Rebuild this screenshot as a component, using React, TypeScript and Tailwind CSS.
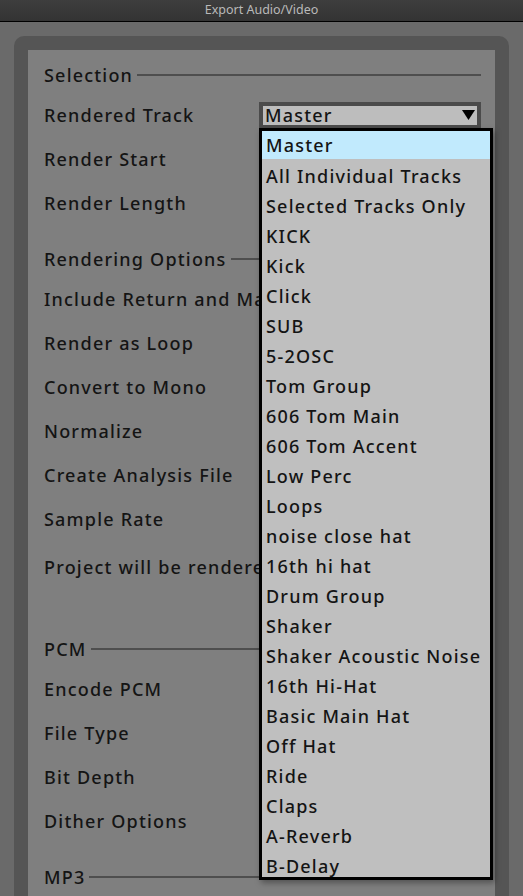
import React from "react";

type Row =
  | { kind: "header"; label: string }
  | { kind: "field"; label: string; tall?: boolean }
  | { kind: "gap"; size: "sm" | "lg" };

const rows: Row[] = [
  { kind: "header", label: "Selection" },
  { kind: "field", label: "Rendered Track" },
  { kind: "field", label: "Render Start" },
  { kind: "field", label: "Render Length" },
  { kind: "gap", size: "sm" },
  { kind: "header", label: "Rendering Options" },
  { kind: "field", label: "Include Return and Master Effects" },
  { kind: "field", label: "Render as Loop" },
  { kind: "field", label: "Convert to Mono" },
  { kind: "field", label: "Normalize" },
  { kind: "field", label: "Create Analysis File" },
  { kind: "field", label: "Sample Rate" },
  { kind: "field", label: "Project will be rendered at 44100 Hz", tall: true },
  { kind: "gap", size: "lg" },
  { kind: "header", label: "PCM" },
  { kind: "field", label: "Encode PCM" },
  { kind: "field", label: "File Type" },
  { kind: "field", label: "Bit Depth" },
  { kind: "field", label: "Dither Options" },
  { kind: "gap", size: "sm" },
  { kind: "header", label: "MP3" },
];

const tracks = [
  "Master",
  "All Individual Tracks",
  "Selected Tracks Only",
  "KICK",
  "Kick",
  "Click",
  "SUB",
  "5-2OSC",
  "Tom Group",
  "606 Tom Main",
  "606 Tom Accent",
  "Low Perc",
  "Loops",
  "noise close hat",
  "16th hi hat",
  "Drum Group",
  "Shaker",
  "Shaker Acoustic Noise",
  "16th Hi-Hat",
  "Basic Main Hat",
  "Off Hat",
  "Ride",
  "Claps",
  "A-Reverb",
  "B-Delay",
];

const TrackSelect = () => (
  <div className="flex h-[27px] w-[222px] shrink-0 items-center justify-between border-4 border-[#4b4b4b] bg-[#bdbdbd] pl-[2px] pr-[2px]">
    <span className="leading-none">Master</span>
    <svg width="13" height="10" viewBox="0 0 13 10" className="mb-[1px]">
      <path d="M0 0 L13 0 L6.5 10 Z" fill="#000" />
    </svg>
  </div>
);

export default function App() {
  return (
    <div
      className="relative h-[896px] w-[523px] overflow-hidden bg-[#6a6a6a] text-[18px] font-medium tracking-[1.2px] text-[#141414]"
      style={{ fontFamily: '"Noto Sans", "Open Sans", sans-serif' }}
    >
      {/* title bar */}
      <div className="flex h-[22px] items-center justify-center border-b border-black bg-gradient-to-b from-[#3e3e3e] to-[#333333] text-[12.5px] font-normal tracking-normal text-[#b9b9b9]">
        Export Audio/Video
      </div>

      <div className="px-[14px] pt-[14px]">
        <div className="rounded-t-[10px] bg-[#555555] px-[14px] pt-[14px]">
          <div className="h-[900px] bg-[#7f7f7f] pl-[16px] pr-[14px] pt-[7px]">
            {rows.map((row, i) => {
              if (row.kind === "gap") {
                return <div key={i} className={row.size === "sm" ? "h-[16px]" : "h-[38px]"} />;
              }
              if (row.kind === "header") {
                return (
                  <div key={i} className="flex h-[36px] items-center gap-[4px]">
                    <span className="whitespace-nowrap">{row.label}</span>
                    <div className="h-[1.5px] flex-1 bg-[#4e4e4e]" />
                  </div>
                );
              }
              return (
                <div
                  key={i}
                  className={`flex items-center justify-between ${row.tall ? "h-[52px]" : "h-[44px]"}`}
                >
                  <span className="max-w-[215px] overflow-hidden whitespace-nowrap">{row.label}</span>
                  {row.label === "Rendered Track" && <TrackSelect />}
                </div>
              );
            })}
          </div>
        </div>
      </div>

      {/* open track menu */}
      <div className="absolute left-[259px] top-[128px] h-[752px] w-[234px] overflow-hidden border-[3px] border-black bg-[#bfbfbf] shadow-[2px_3px_6px_rgba(0,0,0,0.35)]">
        {tracks.map((t, i) => (
          <div
            key={t}
            className={`flex h-[30px] items-center whitespace-nowrap pl-[4px] ${
              i === 0 ? "border-b-2 border-[#bfbfbf] bg-[#c1eafd]" : ""
            }`}
          >
            {t}
          </div>
        ))}
      </div>
    </div>
  );
}
